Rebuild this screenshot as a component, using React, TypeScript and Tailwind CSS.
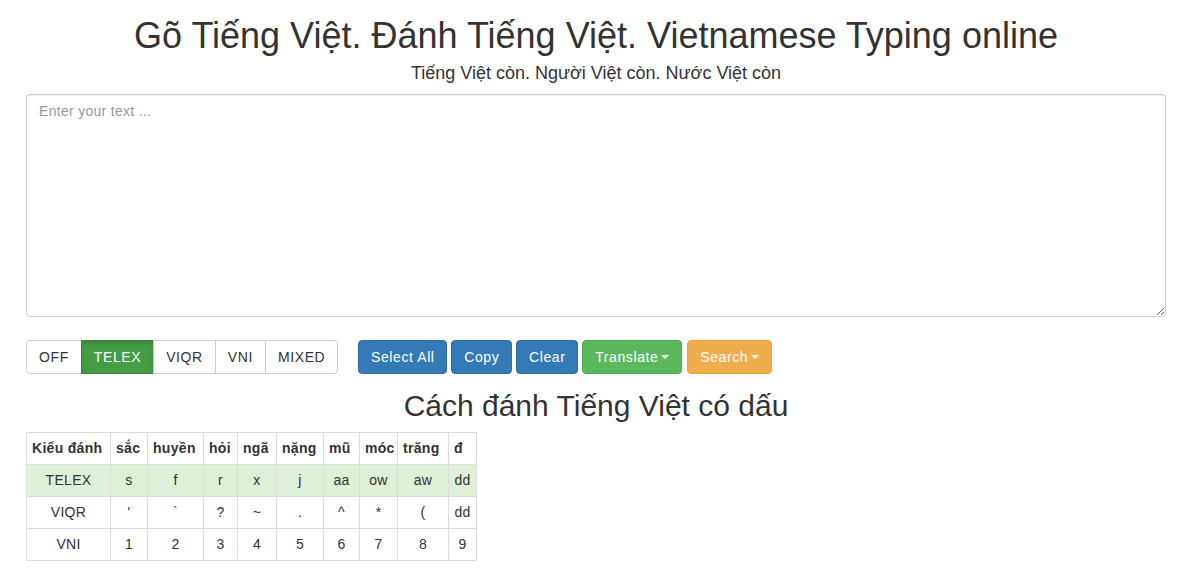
import React from "react";

const cols = [
  { h: "Kiểu đánh", w: 84 },
  { h: "sắc", w: 37 },
  { h: "huyền", w: 56 },
  { h: "hỏi", w: 34 },
  { h: "ngã", w: 39 },
  { h: "nặng", w: 47 },
  { h: "mũ", w: 36 },
  { h: "móc", w: 38 },
  { h: "trăng", w: 51 },
  { h: "đ", w: 28 },
];

const rows = [
  { cells: ["TELEX", "s", "f", "r", "x", "j", "aa", "ow", "aw", "dd"], green: true },
  { cells: ["VIQR", "'", "`", "?", "~", ".", "^", "*", "(", "dd"], green: false },
  { cells: ["VNI", "1", "2", "3", "4", "5", "6", "7", "8", "9"], green: false },
];

function Caret() {
  return (
    <span className="ml-[3px] inline-block h-0 w-0 border-x-[4px] border-t-[4px] border-x-transparent border-t-white align-middle" />
  );
}

export default function App() {
  return (
    <div
      className="min-h-[568px] w-full bg-white text-[#333]"
      style={{ fontFamily: '"Liberation Sans", Arial, Helvetica, sans-serif' }}
    >
      <div className="ml-[26px] w-[1140px]">
        <h1 className="mt-[16px] text-center text-[36px] leading-[40px] font-normal">
          Gõ Tiếng Việt. Đánh Tiếng Việt. Vietnamese Typing online
        </h1>
        <p className="mt-[7px] text-center text-[18px] leading-[20px]">
          Tiếng Việt còn. Người Việt còn. Nước Việt còn
        </p>
        <textarea
          className="mt-[11px] block h-[223px] w-[1140px] rounded-[4px] border border-[#ccc] px-[12px] py-[6px] text-[14px] leading-[20px] tracking-[0.3px] text-[#555] shadow-[inset_0_1px_1px_rgba(0,0,0,0.075)] outline-none placeholder:text-[#999]"
          placeholder="Enter your text ..."
        />
        <div className="mt-[23px] flex h-[34px] items-stretch tracking-[0.6px]">
          <div className="flex h-[34px] text-[14px]">
            <button className="h-[34px] rounded-l-[4px] border border-[#ccc] bg-white px-[12px] text-[#333]">
              OFF
            </button>
            <button className="-ml-px h-[34px] border border-[#398439] bg-[#449d44] px-[12px] text-white shadow-[inset_0_3px_5px_rgba(0,0,0,0.125)]">
              TELEX
            </button>
            <button className="-ml-px h-[34px] border border-[#ccc] bg-white px-[12px] text-[#333]">
              VIQR
            </button>
            <button className="-ml-px h-[34px] border border-[#ccc] bg-white px-[12px] text-[#333]">
              VNI
            </button>
            <button className="-ml-px h-[34px] rounded-r-[4px] border border-[#ccc] bg-white px-[12px] text-[#333]">
              MIXED
            </button>
          </div>
          <div className="ml-[20px] flex gap-[4px] text-[14px] text-white">
            <button className="h-[34px] w-[89px] rounded-[4px] border border-[#2e6da4] bg-[#337ab7]">
              Select All
            </button>
            <button className="h-[34px] w-[61px] rounded-[4px] border border-[#2e6da4] bg-[#337ab7]">
              Copy
            </button>
            <button className="h-[34px] w-[62px] rounded-[4px] border border-[#2e6da4] bg-[#337ab7]">
              Clear
            </button>
            <button className="flex h-[34px] w-[100px] items-center justify-center rounded-[4px] border border-[#4cae4c] bg-[#5cb85c]">
              Translate
              <Caret />
            </button>
            <button className="ml-px flex h-[34px] w-[85px] items-center justify-center rounded-[4px] border border-[#eea236] bg-[#f0ad4e]">
              Search
              <Caret />
            </button>
          </div>
        </div>
        <h2 className="mt-[15px] text-center text-[30px] leading-[33px] font-normal">
          Cách đánh Tiếng Việt có dấu
        </h2>
        <table className="mt-[10px] w-[450px] table-fixed border-collapse border border-[#ddd] text-[14px] tracking-[0.3px]">
          <colgroup>
            {cols.map((c) => (
              <col key={c.h} style={{ width: c.w }} />
            ))}
          </colgroup>
          <thead>
            <tr className="h-[32px]">
              {cols.map((c) => (
                <th
                  key={c.h}
                  className="border border-[#ddd] px-[5px] text-left font-bold whitespace-nowrap"
                >
                  {c.h}
                </th>
              ))}
            </tr>
          </thead>
          <tbody>
            {rows.map((r) => (
              <tr key={r.cells[0]} className={r.green ? "h-[32px] bg-[#dff0d8]" : "h-[32px]"}>
                {r.cells.map((c, i) => (
                  <td key={i} className="border border-[#ddd] px-[5px] text-center">
                    {c}
                  </td>
                ))}
              </tr>
            ))}
          </tbody>
        </table>
      </div>
    </div>
  );
}
